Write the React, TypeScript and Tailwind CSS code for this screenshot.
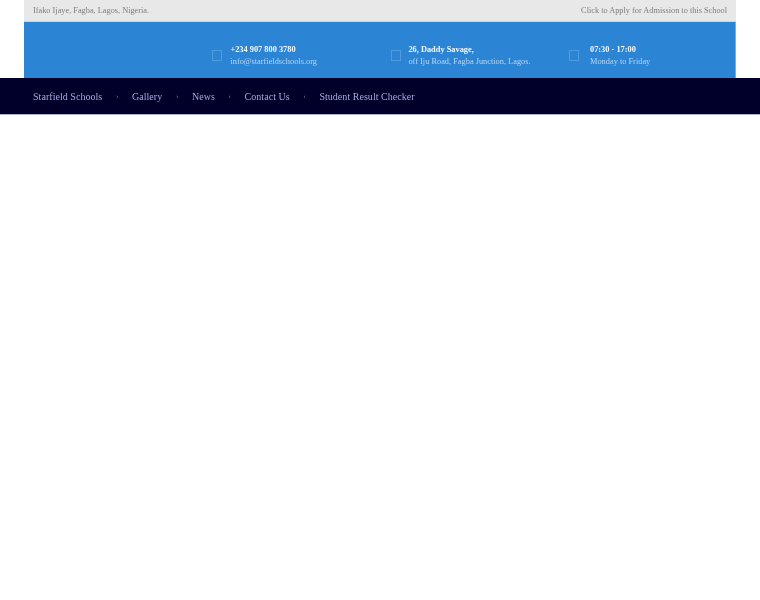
const serif = "font-['Liberation_Serif',serif]";

function Info({ title, sub, w, gap }: { title: string; sub: string; w: string; gap: string }) {
  return (
    <div className={`flex items-center ${w}`}>
      <span className={`w-[10px] h-[11px] -mt-[3px] ${gap} border border-[#4f9be0] box-border shrink-0`} />
      <div className="text-[8.35px] leading-[12px] -mt-[1px]">
        <div className="font-bold text-[#f2f7fc]">{title}</div>
        <div className="text-[#b5d6f4]">{sub}</div>
      </div>
    </div>
  );
}

function Sep() {
  return <span className="w-[29.7px] text-center text-[#7f86b5] text-[7px] leading-none">›</span>;
}

export default function App() {
  return (
    <div className={`${serif} w-[760px] h-[600px] bg-white overflow-hidden`}>
      <div className="blur-[0.7px]">
        <div className="mx-6 h-[22px] bg-[#e8e8e8] flex items-center justify-between px-[9px] pt-[2px] text-[8.3px] text-[#7c7c7c] border-b border-[#c9d8e6]">
          <span>Ifako Ijaye, Fagba, Lagos, Nigeria.</span>
          <span>Click to Apply for Admission to this School</span>
        </div>
        <div className="mx-6 h-[56px] bg-[#2c84d4] flex items-center pl-[188px] pt-[13px] border-r border-[#6fb0ea]">
          <Info w="w-[179px]" gap="mr-[8.4px]" title="+234 907 800 3780" sub="info@starfieldschools.org" />
          <Info w="w-[178px]" gap="mr-[7.4px]" title="26, Daddy Savage," sub="off Iju Road, Fagba Junction, Lagos." />
          <Info w="w-[160px]" gap="mr-[11px]" title="07:30 - 17:00" sub="Monday to Friday" />
        </div>
        <nav className="h-[37px] bg-[#00002a] flex items-center pl-[33px] text-[10px] tracking-[0.04px] text-[#a3a9e0] border-b border-[#aab0d0]">
          <span>Starfield Schools</span>
          <Sep />
          <span>Gallery</span>
          <Sep />
          <span>News</span>
          <Sep />
          <span>Contact Us</span>
          <Sep />
          <span>Student Result Checker</span>
        </nav>
      </div>
    </div>
  );
}
